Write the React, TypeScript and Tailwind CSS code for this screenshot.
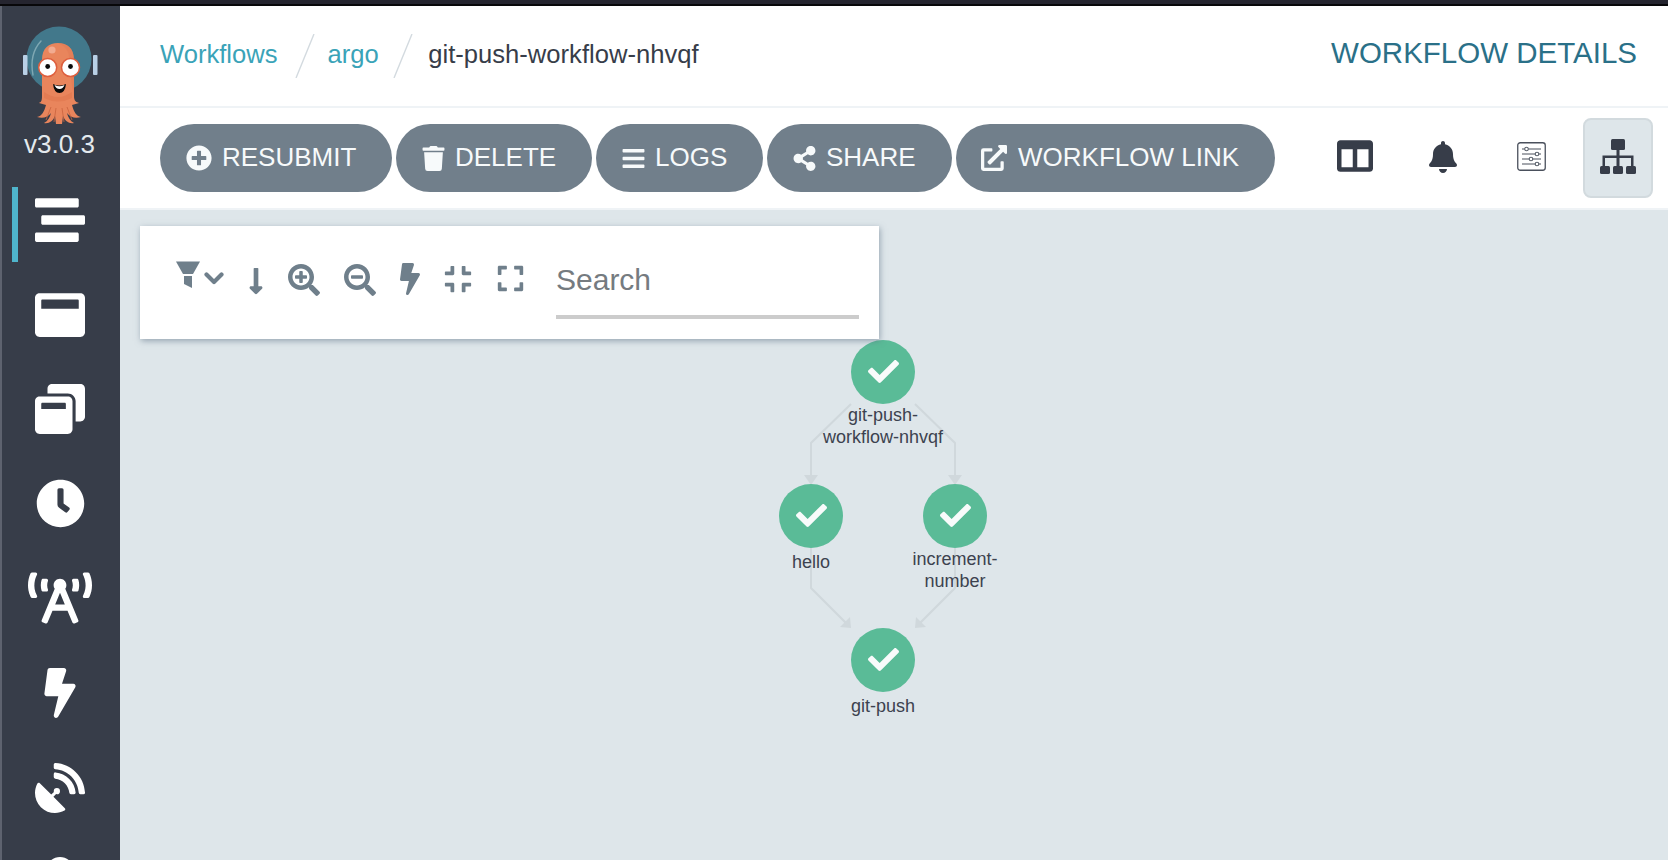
import React from "react";
import {
  FaStream, FaWindowMaximize, FaWindowRestore, FaClock, FaBroadcastTower, FaBolt, FaSatelliteDish, FaUserAlt,
  FaPlusCircle, FaTrash, FaBars, FaShareAlt, FaExternalLinkAlt, FaColumns, FaBell,
  FaLongArrowAltDown, FaSearchPlus, FaSearchMinus, FaCompress, FaExpand, FaCheck,
} from "react-icons/fa";

function Logo() {
  return (
    <svg viewBox="0 0 100 120" className="w-[100px] h-[120px] block">
      <circle cx="49" cy="47" r="32.5" fill="#42788b" />
      <path d="M31 29 Q19 42 23 63" fill="none" stroke="#7fa8b3" strokeWidth="1.4" strokeLinecap="round" />
      <rect x="13" y="43" width="4.5" height="20" rx="1" fill="#b9d0e6" />
      <rect x="83" y="43" width="4.5" height="20" rx="1" fill="#b9d0e6" />
      <path d="M32 48 C32 36 39 31 48 31 C57 31 64 36 64 48 L64 84 C64 89 66 90 69 91 L62 93 C64 100 66 104 71 105 C65 107 60 105 57 101 C58 105 60 109 64 111 C59 112 55 109 53 104 L52 112 L46 112 L45 104 C43 109 39 112 34 111 C38 109 40 105 41 101 C38 105 33 107 27 105 C32 104 34 100 36 93 L29 91 C31 90 32 89 32 84 Z" fill="#e9855c" />
      <path d="M34 80 Q48 90 62 80 L62 86 Q48 93 34 86 Z" fill="#dc6f47" opacity="0.4" />
      <path d="M48 31 C57 31 64 36 64 48 L64 84 Q59 60 59 45 Q59 36 48 31 Z" fill="#dd7550" opacity="0.35" />
      <path d="M41 95 L36 108 M46 96 L44 110 M52 96 L54 110 M57 95 L62 108" stroke="#c9623e" strokeWidth="0.8" fill="none" />
      <circle cx="42" cy="38" r="3.6" fill="#f2ab90" />
      <circle cx="37.7" cy="55.5" r="9" fill="#fff" stroke="#de5f3e" strokeWidth="1.5" />
      <circle cx="60.5" cy="55.5" r="9" fill="#fff" stroke="#de5f3e" strokeWidth="1.5" />
      <circle cx="37.7" cy="54.5" r="2.4" fill="#0b0b0b" />
      <circle cx="60.5" cy="54.5" r="2.4" fill="#0b0b0b" />
      <path d="M43 72 Q49 75 56 72 Q55 81 49.5 81 Q44 81 43 72 Z" fill="#0b0b0b" />
      <path d="M44.5 73 Q49.5 75.5 54.5 73 Q53 77 49.5 77 Q46 77 44.5 73 Z" fill="#fff" />
    </svg>
  );
}

function NavItem({ active, children }: { active?: boolean; children: React.ReactNode }) {
  return (
    <div className="relative h-[94.6px] shrink-0 flex items-center justify-center pr-[2px] text-white">
      {active && <div className="absolute left-[10px] top-[14px] w-[6px] h-[75px] bg-[#4fb5cc]" />}
      {children}
    </div>
  );
}

function Sidebar() {
  return (
    <div className="w-[118px] shrink-0 bg-[#373d49] overflow-hidden flex flex-col">
      <div className="pl-[8px] pt-[6px] h-[124px] shrink-0">
        <Logo />
      </div>
      <div className="relative h-[30px] shrink-0 pr-[3px] mb-[12.7px] pb-[1px] text-center text-[26px] leading-[28px] text-[#e4eaee]">v3.0.3</div>
      <NavItem active><FaStream size={50} /></NavItem>
      <NavItem><FaWindowMaximize size={50} /></NavItem>
      <NavItem><FaWindowRestore size={50} /></NavItem>
      <NavItem><FaClock size={49} /></NavItem>
      <NavItem><FaBroadcastTower size={64} /></NavItem>
      <NavItem><FaBolt size={50} /></NavItem>
      <NavItem><FaSatelliteDish size={50} /></NavItem>
      <NavItem><FaUserAlt size={50} /></NavItem>
    </div>
  );
}

function Slash() {
  return (
    <svg viewBox="0 0 20 44" className="w-[20px] h-[44px] block shrink-0">
      <line x1="1" y1="44" x2="19" y2="0" stroke="#d3dadf" strokeWidth="1.4" />
    </svg>
  );
}

function Header() {
  return (
    <div className="h-[102px] shrink-0 bg-white border-b-2 border-[#eff3f6] flex items-center pl-[40px] pr-[31px] pb-[4px] text-[25.6px] leading-[30px]">
      <span className="text-[#3aa3b8]">Workflows</span>
      <div className="ml-[17px] mr-[13px] mt-[4px]"><Slash /></div>
      <span className="text-[#3aa3b8]">argo</span>
      <div className="ml-[14px] mr-[15.5px] mt-[4px]"><Slash /></div>
      <span className="text-[#373d49]">git-push-workflow-nhvqf</span>
      <span className="ml-auto -mt-[2px] text-[#2a7088] text-[29.5px] leading-[34px]">WORKFLOW DETAILS</span>
    </div>
  );
}

function Pill({ icon, label, className }: { icon: React.ReactNode; label: string; className: string }) {
  return (
    <div className={"h-[68px] rounded-[34px] bg-[#717f8b] flex items-center text-[#f7fafb] text-[26px] leading-[30px] " + className}>
      {icon}
      <span className="-mt-[2px]">{label}</span>
    </div>
  );
}

function SlidersIcon() {
  return (
    <svg viewBox="0 0 29 29" className="w-[29px] h-[29px] block" fill="none">
      <rect x="0.75" y="0.75" width="27.5" height="27.5" rx="2.5" stroke="#4a505c" strokeWidth="1.3" />
      <g stroke="#59606b" strokeWidth="1.1">
        <line x1="5" y1="7" x2="24" y2="7" />
        <line x1="5" y1="12" x2="24" y2="12" />
        <line x1="5" y1="17" x2="24" y2="17" />
        <line x1="5" y1="22" x2="24" y2="22" />
        <circle cx="9.5" cy="7" r="1.8" fill="#fff" />
        <circle cx="20" cy="12" r="1.8" fill="#fff" />
        <circle cx="14" cy="17" r="1.8" fill="#fff" />
        <circle cx="20" cy="22" r="1.8" fill="#fff" />
      </g>
    </svg>
  );
}

function SitemapIcon() {
  return (
    <svg viewBox="0 0 36 35" className="w-[36px] h-[35px] block -mt-[3px]" fill="#373d49">
      <rect x="11" y="0" width="14" height="11" rx="1.5" />
      <path d="M17 11 H19.5 V16.5 H33.5 V27 H31 V19 H19.5 V27 H16.5 V19 H5 V27 H2.5 V16.5 H16.5 V11 Z" />
      <rect x="0" y="27" width="10" height="8" rx="1.5" />
      <rect x="13" y="27" width="10" height="8" rx="1.5" />
      <rect x="26" y="27" width="10" height="8" rx="1.5" />
    </svg>
  );
}

function Toolbar() {
  return (
    <div className="h-[102px] shrink-0 bg-white border-b-2 border-[#eff3f6] flex items-center pl-[40px] pr-[15px]">
      <div className="flex items-center gap-[4px]">
        <Pill className="w-[232px] pl-[26px]" icon={<FaPlusCircle size={26} className="mr-[10px] shrink-0" />} label="RESUBMIT" />
        <Pill className="w-[196px] pl-[25px]" icon={<FaTrash size={25} className="mr-[9px] shrink-0" />} label="DELETE" />
        <Pill className="w-[167px] pl-[25px]" icon={<FaBars size={25} className="mr-[9px] shrink-0" />} label="LOGS" />
        <Pill className="w-[185px] pl-[25px]" icon={<FaShareAlt size={25} className="mr-[9px] shrink-0" />} label="SHARE" />
        <Pill className="w-[319px] pl-[25px]" icon={<FaExternalLinkAlt size={26} className="mr-[11px] shrink-0" />} label="WORKFLOW LINK" />
      </div>
      <div className="ml-auto flex items-center text-[#373d49]">
        <FaColumns size={36} className="-mt-[4px]" />
        <FaBell size={32} className="ml-[54px] -mt-[3px]" />
        <div className="ml-[58px] -mt-[3px]"><SlidersIcon /></div>
        <div className="ml-[37px] w-[70px] h-[80px] rounded-[8px] border-2 border-[#d2dade] bg-[#dee6ea] flex items-center justify-center">
          <SitemapIcon />
        </div>
      </div>
    </div>
  );
}

function FilterIcon() {
  return (
    <svg viewBox="0 0 24 27" className="w-[24px] h-[27px] block">
      <path d="M0 0.5 H24 L17 13 H7 Z" fill="#6f7f8b" />
      <path d="M8 15 H16 V27 L8 23 Z" fill="#6f7f8b" />
    </svg>
  );
}

function ChevronIcon() {
  return (
    <svg viewBox="0 0 20 13" className="w-[20px] h-[13px] block">
      <path d="M2.5 2.5 L10 10 L17.5 2.5" fill="none" stroke="#6f7f8b" strokeWidth="4.2" strokeLinecap="round" strokeLinejoin="round" />
    </svg>
  );
}

function FilterPanel() {
  return (
    <div className="absolute left-[20px] top-[16px] w-[739px] h-[113px] bg-white shadow-[1px_2px_6px_rgba(90,110,130,0.55)] flex items-center pl-[36px] text-[#6f7f8b] z-10">
      <div className="flex items-center h-[60px] -mt-[4px]">
        <div className="-mt-[12px]"><FilterIcon /></div>
        <div className="ml-[4px] -mt-[4px]"><ChevronIcon /></div>
        <FaLongArrowAltDown size={30} className="ml-[17px]" />
        <FaSearchPlus size={32} className="ml-[17px] -mt-[2px]" />
        <FaSearchMinus size={32} className="ml-[24px] -mt-[2px]" />
        <FaBolt size={32} className="ml-[18px] -mt-[4px]" />
        <FaCompress size={30} className="ml-[17px] -mt-[4px]" />
        <FaExpand size={29} className="ml-[22.5px] -mt-[4px]" />
      </div>
      <div className="ml-[31.5px] w-[303px] h-[70px] mt-[3px] border-b-4 border-[#cccccc] flex items-center pb-[4px] text-[30px] leading-[34px] text-[#757b80]">Search</div>
    </div>
  );
}

function Edges() {
  const stroke = "#d0d8dc";
  return (
    <svg viewBox="0 0 1548 650" className="absolute left-0 top-0 w-[1548px] h-[650px] block">
      <g fill="none" stroke={stroke} strokeWidth="2">
        <path d="M731 194 L691 233 L691 270" />
        <path d="M795 194 L835 233 L835 270" />
        <path d="M691 338 L691 378 L727 414" />
        <path d="M835 338 L835 378 L799 414" />
      </g>
      <g fill={stroke}>
        <path d="M684 265 H698 L691 275 Z" />
        <path d="M828 265 H842 L835 275 Z" />
        <path d="M720 417 L731 418 L730 407 Z" />
        <path d="M806 417 L795 418 L796 407 Z" />
      </g>
    </svg>
  );
}

function Node({ className, label, labelClass }: { className: string; label: React.ReactNode; labelClass?: string }) {
  return (
    <div className={"absolute w-[64px] flex flex-col items-center " + className}>
      <div className="w-[64px] h-[64px] rounded-full bg-[#5abb97] flex items-center justify-center text-[#f8fbfb] shrink-0">
        <FaCheck size={31} className="-mt-[2px]" />
      </div>
      <div className={"w-[150px] shrink-0 text-center text-[18px] leading-[22px] text-[#3c424f] " + (labelClass ?? "")}>{label}</div>
    </div>
  );
}

function Canvas() {
  return (
    <div className="relative flex-1 bg-[#dee6ea] overflow-hidden">
      <Edges />
      <FilterPanel />
      <Node className="left-[731px] top-[130px]" label={<>git-push-<br />workflow-nhvqf</>} />
      <Node className="left-[659px] top-[274px]" labelClass="mt-[3px]" label="hello" />
      <Node className="left-[803px] top-[274px]" label={<>increment-<br />number</>} />
      <Node className="left-[731px] top-[418px]" labelClass="mt-[3px]" label="git-push" />
    </div>
  );
}

export default function App() {
  return (
    <div className="w-[1668px] h-[860px] overflow-hidden flex flex-col font-['Liberation_Sans',Arial,sans-serif]">
      <div className="h-[4px] shrink-0 bg-[#25252f]" />
      <div className="h-[2px] shrink-0 bg-[#08080a]" />
      <div className="flex flex-1 min-h-0">
        <div className="w-[2px] shrink-0 bg-[#5e636f]" />
        <Sidebar />
        <div className="flex-1 min-w-0 flex flex-col">
          <Header />
          <Toolbar />
          <Canvas />
        </div>
      </div>
    </div>
  );
}
